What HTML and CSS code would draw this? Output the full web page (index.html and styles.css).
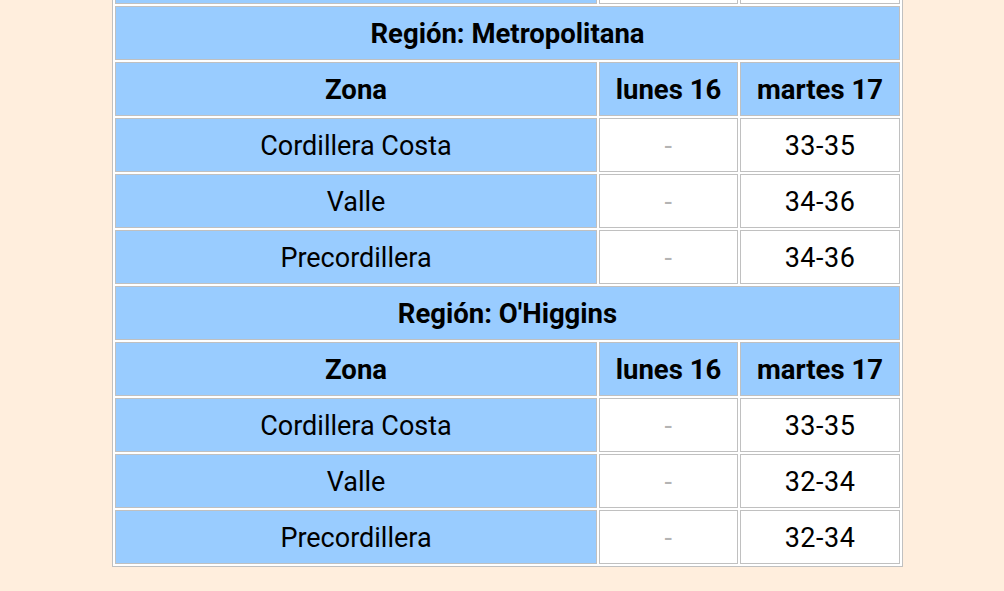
FILE: index.html
```html
<!DOCTYPE html>
<html lang="es">
<head>
<meta charset="utf-8">
<title>Pronóstico</title>
<link rel="stylesheet" href="styles.css">
</head>
<body>
<table class="forecast">
  <tr>
    <td class="zone c1"></td>
    <td class="val c2"></td>
    <td class="val c3"></td>
  </tr>
  <tr><th class="region" colspan="3">Región: Metropolitana</th></tr>
  <tr>
    <th class="head">Zona</th>
    <th class="head">lunes 16</th>
    <th class="head">martes 17</th>
  </tr>
  <tr>
    <td class="zone">Cordillera Costa</td>
    <td class="val nil">-</td>
    <td class="val">33-35</td>
  </tr>
  <tr>
    <td class="zone">Valle</td>
    <td class="val nil">-</td>
    <td class="val">34-36</td>
  </tr>
  <tr>
    <td class="zone">Precordillera</td>
    <td class="val nil">-</td>
    <td class="val">34-36</td>
  </tr>
  <tr><th class="region" colspan="3">Región: O'Higgins</th></tr>
  <tr>
    <th class="head">Zona</th>
    <th class="head">lunes 16</th>
    <th class="head">martes 17</th>
  </tr>
  <tr>
    <td class="zone">Cordillera Costa</td>
    <td class="val nil">-</td>
    <td class="val">33-35</td>
  </tr>
  <tr>
    <td class="zone">Valle</td>
    <td class="val nil">-</td>
    <td class="val">32-34</td>
  </tr>
  <tr>
    <td class="zone">Precordillera</td>
    <td class="val nil">-</td>
    <td class="val">32-34</td>
  </tr>
</table>
</body>
</html>
```
FILE: styles.css
```css
html, body {
  margin: 0;
  padding: 0;
  background: #ffeedd;
  overflow: hidden;
}

body {
  font-family: Roboto, "Liberation Sans", sans-serif;
  color: #000;
}

.forecast {
  margin: -53px 0 0 112px;
  border: 1px solid #c0c0c0;
  border-spacing: 2px;
  border-collapse: separate;
  background: #fff;
}

.forecast th,
.forecast td {
  height: 50px;
  padding: 2px 0 0;
  border: 1px solid #c0c0c0;
  text-align: center;
  vertical-align: middle;
  font-size: 27px;
  line-height: 32px;
}

.c1 { width: 480px; }
.c2 { width: 137px; }
.c3 { width: 158px; }

.region,
.head {
  background: #99ccff;
  font-weight: 700;
  font-size: 27.5px;
}

.forecast .region,
.forecast .head {
  font-size: 27.5px;
}

.zone {
  background: #99ccff;
  font-weight: 400;
}

.val {
  background: #fff;
  letter-spacing: 0.5px;
}

.nil {
  color: #b4b4b4;
}
```
